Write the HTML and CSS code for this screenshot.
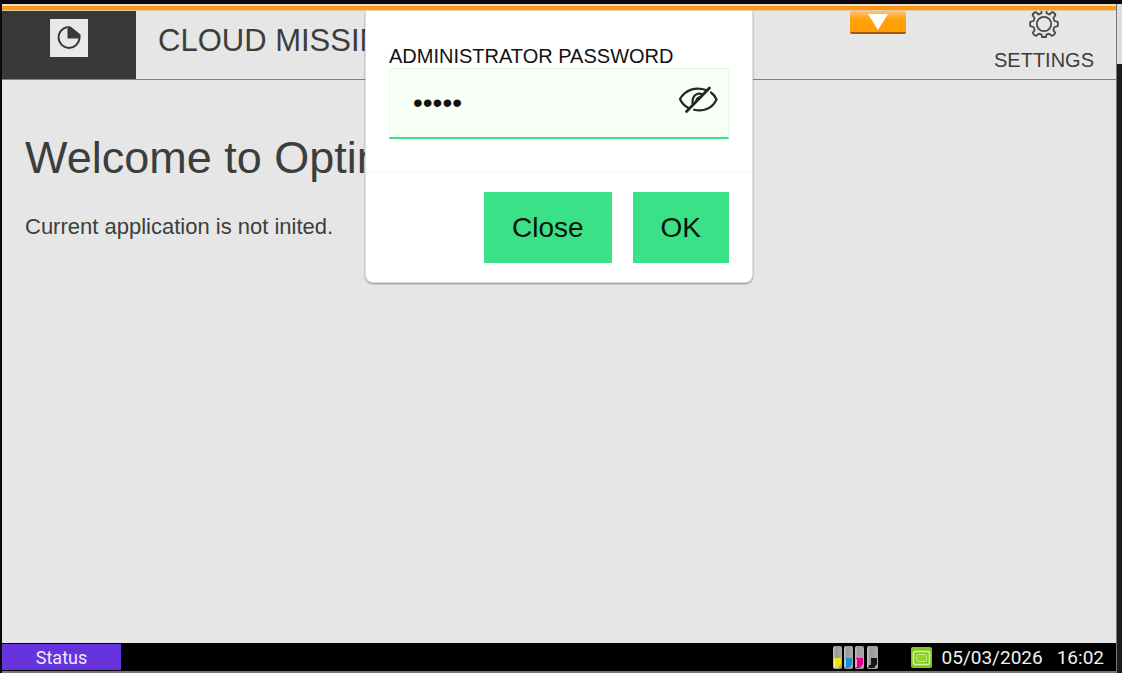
FILE: index.html
```
<!DOCTYPE html>
<html lang="en">
<head>
    <meta charset="UTF-8">
    <meta name="viewport" content="width=device-width, initial-scale=1.0">
    <title>Administrator Password</title>
    <link rel="stylesheet" href="styles.css">
</head>
<body>
    <div class="screen">
        <div class="accent"></div>
        <div class="app">
            <header class="topbar">
                <div class="logo">
                    <svg width="38" height="38" viewBox="0 0 38 38" aria-hidden="true">
                        <rect width="38" height="38" fill="#e8e8e8"/>
                        <path d="M17.500 8A10.500 10.500 0 1 0 29.500 19" fill="none" stroke="#383838" stroke-width="2"/>
                        <path d="M17.500 7L20.500 7.500L30.500 15.500V19.500H17.500Z" fill="#383838"/>
                    </svg>
                </div>
                <div class="title">CLOUD MISSING</div>
                <button class="pull-tab" type="button" aria-label="Open panel">
                    <svg width="20" height="16" viewBox="0 0 20 16" aria-hidden="true">
                        <path d="M0 0H20L10 16Z" fill="#fff"/>
                    </svg>
                </button>
                <button class="settings" type="button">
                    <svg width="30" height="28" viewBox="0 0 30 28" fill="none" stroke="#454a45" stroke-width="1.800" stroke-linejoin="round" aria-hidden="true">
                        <circle cx="15" cy="13" r="7.200"/>
                        <path d="M12.500 -1V2.200L9.500 3.500L7 1.200Q4.500 1.300 3.600 4.200L5.600 7L4.500 10L1.200 10.800V15.200L4.500 16L5.700 19L3.700 22Q4.800 24.500 7.200 24.800L10 22.700L12.600 23.700L13 26H17L17.400 23.700L20 22.700L22.800 24.800Q25.200 24.500 26.300 22L24.300 19L25.500 16L28.800 15.200V10.800L25.500 10L24.400 7L26.400 4.200Q25.500 1.300 23 1.200L20.500 3.500L17.500 2.200V-1"/>
                    </svg>
                    <span>SETTINGS</span>
                </button>
            </header>

            <main class="content">
                <h1>Welcome to Optim</h1>
                <p>Current application is not inited.</p>
            </main>

            <form class="dialog" role="dialog" aria-label="Administrator password">
                <div class="dialog-body">
                    <label for="password">ADMINISTRATOR PASSWORD</label>
                    <div class="field">
                        <input type="password" id="password" value="admin" autocomplete="off">
                        <button class="reveal" type="button" aria-label="Show password">
                            <svg width="40" height="28" viewBox="0 0 40 28" fill="none" stroke="#222722" stroke-width="2.200" stroke-linecap="round" aria-hidden="true">
                                <path d="M28 4C18 0.500 7.500 3.500 2 13C3.800 17.500 6.800 20 10.500 22"/>
                                <path d="M33 6.500C35.800 8.500 37.500 11 38.500 13.500C34.500 22.500 25.500 26 16 23.800"/>
                                <path d="M25 8.700C19.500 5.700 14 9.500 14.500 17.500"/>
                                <path d="M22.500 10.700C19.300 11 18.300 12.500 18 15" stroke-width="1.600"/>
                                <path d="M31.500 2L8.500 25.500" stroke-width="2.800"/>
                            </svg>
                        </button>
                    </div>
                </div>
                <div class="dialog-footer">
                    <button class="btn" type="button">Close</button>
                    <button class="btn" type="button">OK</button>
                </div>
            </form>
        </div>

        <footer class="statusbar">
            <button class="status" type="button">Status</button>
            <svg class="toner" width="46" height="23" viewBox="0 0 46 23" role="img" aria-label="Toner levels">
                <defs>
                    <linearGradient id="shell" x1="0" x2="1">
                        <stop offset="0" stop-color="#c4c4c4"/>
                        <stop offset="0.3" stop-color="#999"/>
                        <stop offset="1" stop-color="#aaa"/>
                    </linearGradient>
                </defs>
                <g fill="url(#shell)">
                    <rect x="0" y="0" width="9" height="23" rx="2"/>
                    <rect x="11" y="0" width="9" height="23" rx="2"/>
                    <rect x="22" y="0" width="9" height="23" rx="2"/>
                    <rect x="34" y="0" width="11" height="23" rx="2"/>
                </g>
                <path d="M1 12H8V18L5 22H1Z" fill="#f0e500"/>
                <path d="M12 12H19V18L16 22H12Z" fill="#0795df"/>
                <path d="M23 12H30V18L27 22H23Z" fill="#e6008a"/>
                <path d="M38 12H44V18L41 22H35V19H38Z" fill="#151515"/>
                <path d="M1.500 13V21M12.500 13V21M23.500 13V21M35.500 19V21" stroke="#fff" stroke-opacity="0.6"/>
            </svg>
            <svg class="power" width="21" height="21" viewBox="0 0 21 21" role="img" aria-label="Ready">
                <rect width="21" height="21" rx="2" fill="#80c81d"/>
                <rect x="2.500" y="4.500" width="16" height="13" rx="2" fill="none" stroke="#d9f5a8" stroke-width="1.500"/>
                <rect x="5.500" y="7.500" width="10" height="7" rx="1" fill="#8fd52a" stroke="#c7ec8b"/>
            </svg>
            <time datetime="2026-03-05T16:02"><span>05/03/2026</span><span>16:02</span></time>
        </footer>
        <div class="edge"></div>
    </div>
</body>
</html>
```
FILE: styles.css
```
* {
    box-sizing: border-box;
}
body {
    margin: 0;
    background: #0a080a;
    font-family: "Liberation Sans", Arial, sans-serif;
    color: #3c3e3c;
}
button {
    border: none;
    padding: 0;
    color: inherit;
    font-family: inherit;
    cursor: pointer;
}
svg {
    display: block;
}
.screen {
    display: grid;
    grid-template-columns: 1fr 6px;
    grid-template-rows: 7px 1fr 30px;
    height: 100vh;
    padding: 4px 0 0 2px;
}
.accent {
    background: #ff9817;
    border-top: 2px solid #eadfd0;
    border-bottom: 1px solid #e3c9a4;
}
.app {
    position: relative;
    grid-row: 2;
    background: #e6e6e6;
    display: flex;
    flex-direction: column;
    overflow: hidden;
}
.edge {
    grid-column: 2;
    grid-row: 1 / 4;
    border-left: 1px solid #777;
    background: linear-gradient(#dfdce1 60px, #1c1c1c 60px);
}

.topbar {
    display: flex;
    align-items: flex-start;
    height: 69px;
    border-bottom: 1px solid #7e847e;
}
.logo {
    display: flex;
    justify-content: center;
    align-self: stretch;
    width: 134px;
    padding-top: 8px;
    background: #383838;
}
.title {
    flex: 1;
    min-width: 0;
    padding: 12px 22px;
    font-size: 31px;
    line-height: 36px;
    white-space: nowrap;
    overflow: hidden;
}
.pull-tab {
    display: flex;
    justify-content: center;
    width: 56px;
    height: 23px;
    margin-right: 88px;
    padding-top: 3px;
    border-bottom: 2px solid #a35a06;
    border-radius: 2px;
    background: linear-gradient(#ffc27a, #ffa20a 40%, #ff9f00);
}
.settings {
    display: flex;
    flex-direction: column;
    align-items: center;
    margin-right: 22px;
    background: none;
    font-size: 20px;
    line-height: 24px;
}
.settings span {
    margin-top: 9px;
}

.content {
    padding: 50px 23px;
}
h1 {
    margin: 0;
    font-size: 45px;
    font-weight: normal;
    line-height: 56px;
}
p {
    margin: 28px 0 0;
    font-size: 22px;
    line-height: 26px;
}

/* hangs from the top edge, over the page */
.dialog {
    position: absolute;
    top: 0;
    left: 50%;
    width: 388px;
    max-width: 100%;
    transform: translateX(-50%);
    background: #fff;
    border: 1px solid #d9e2d9;
    border-top: none;
    border-radius: 0 0 8px 8px;
    box-shadow: 0 1px 2px rgba(0, 0, 0, 0.4);
    color: #111;
}
.dialog-body {
    padding: 33px 23px;
    border-bottom: 1px solid #eefaef;
}
.dialog-body label {
    display: block;
    font-size: 20px;
    line-height: 24px;
}
.field {
    display: flex;
    align-items: center;
    height: 71px;
    border: 1px solid #e3fae6;
    border-bottom: 2px solid #42d983;
    background: #f7fff7;
}
.field input {
    flex: 1;
    min-width: 0;
    height: 100%;
    padding: 0 23px;
    border: none;
    outline: none;
    background: none;
    color: #111;
    font-family: inherit;
    font-size: 28px;
}
.reveal {
    margin: 0 10px 6px 0;
    background: none;
}
.dialog-footer {
    display: flex;
    justify-content: flex-end;
    gap: 21px;
    padding: 19px 23px;
}
.btn {
    height: 71px;
    padding: 0 28px;
    background: #3ae187;
    color: #06150c;
    font-size: 28px;
}

.statusbar {
    grid-row: 3;
    display: flex;
    align-items: center;
    padding-right: 12px;
    background: #000;
    border-bottom: 2px solid #777;
    color: #f0f0f0;
    font-family: Roboto, sans-serif;
    font-size: 19px;
}
.status {
    width: 119px;
    height: 26px;
    background: #6633dd;
    color: #efeaff;
    font-size: 18px;
}
.toner {
    margin-left: auto;
}
.power {
    margin: 0 10px 0 32px;
}
.statusbar time {
    display: flex;
    gap: 14px;
}
```
